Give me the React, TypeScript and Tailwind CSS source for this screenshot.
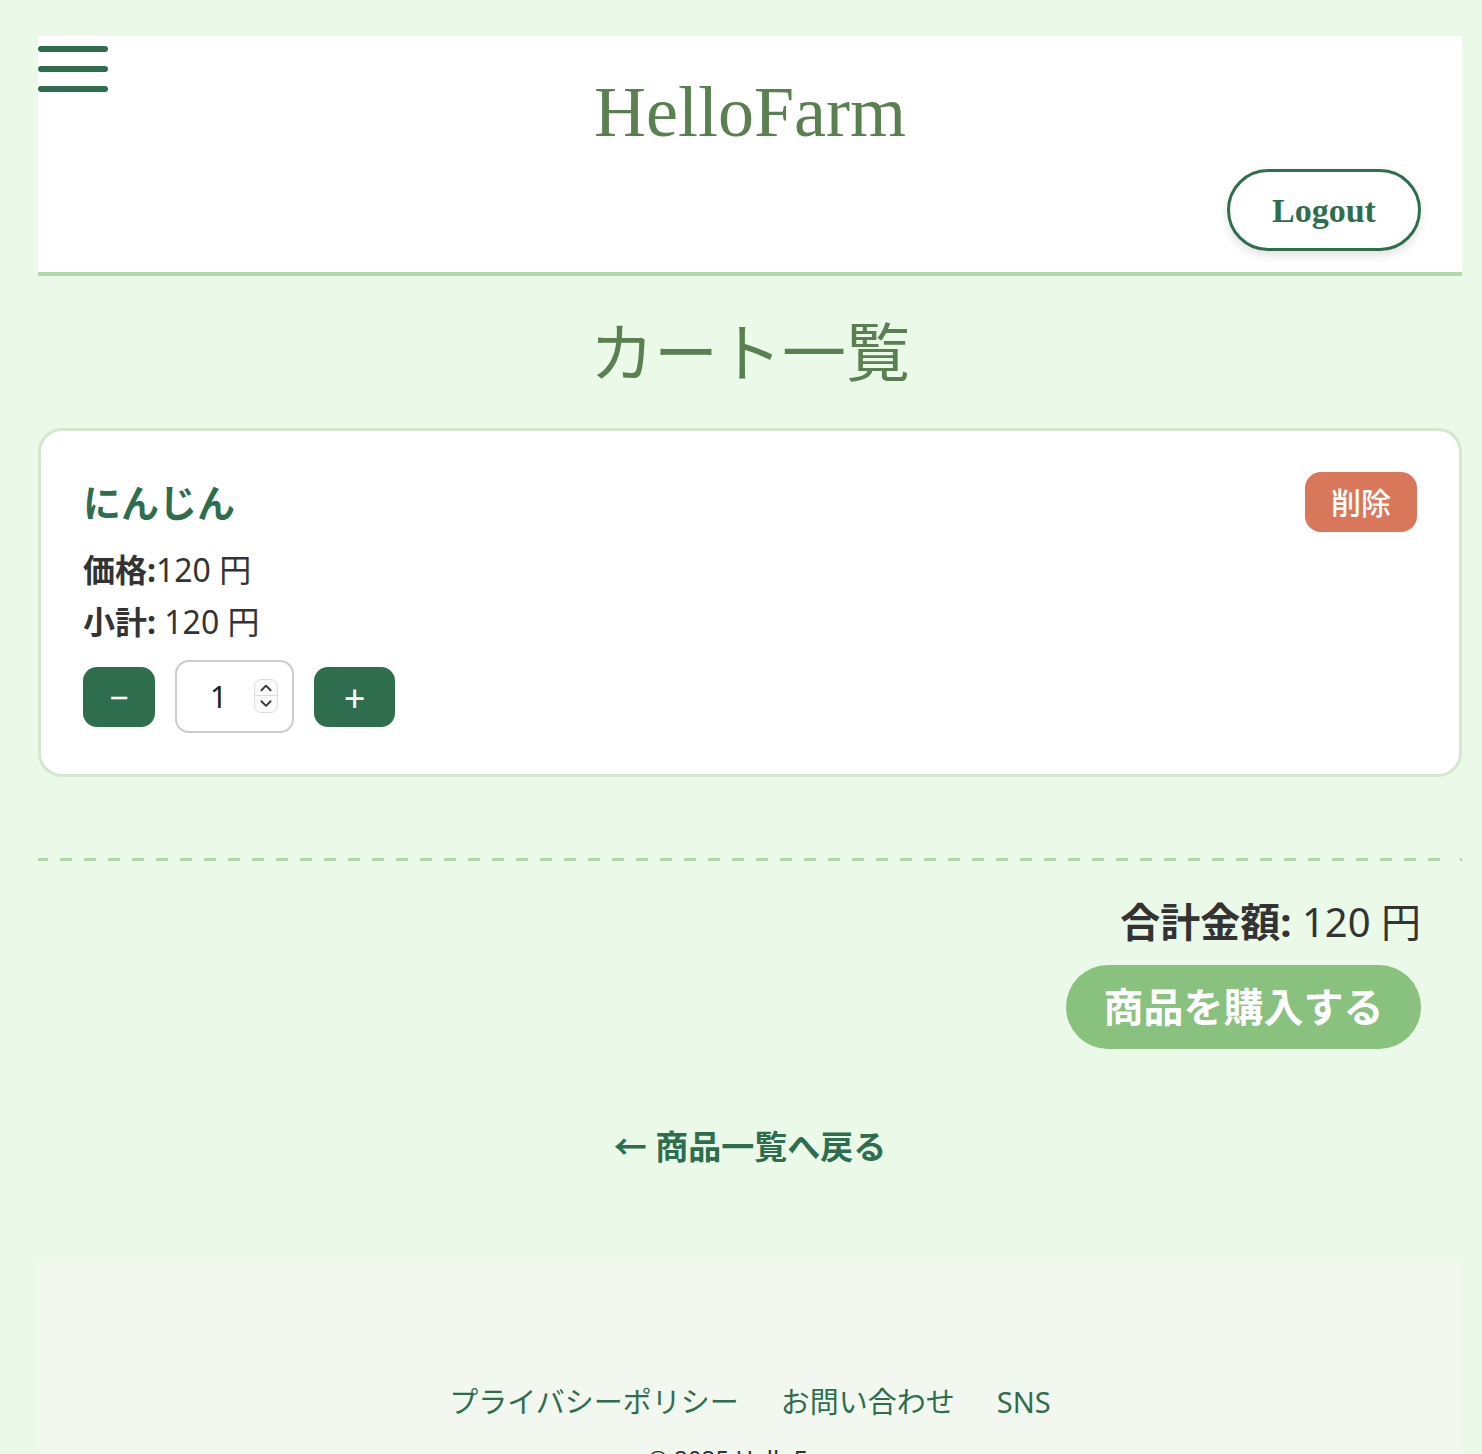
import React from 'react';

const jp = "font-['Noto_Sans','Noto_Sans_CJK_JP',sans-serif]";

function Header() {
  return (
    <header className="relative bg-white border-b-4 border-[#b0d8a8] pt-[40px] pb-[21px]">
      <button className="absolute left-0 top-[10px] flex flex-col gap-[14px]" aria-label="menu">
        <span className="block w-[70px] h-[6px] rounded-full bg-[#2e6e4e]" />
        <span className="block w-[70px] h-[6px] rounded-full bg-[#2e6e4e]" />
        <span className="block w-[70px] h-[6px] rounded-full bg-[#2e6e4e]" />
      </button>
      <h1 className="text-center text-[72px] leading-[72px] text-[#5a7f50] font-['Liberation_Serif',serif]">
        HelloFarm
      </h1>
      <div className="flex justify-end mt-[21px] pr-[41px]">
        <button className="h-[82px] w-[194px] rounded-full border-[3px] border-[#2e6e4e] bg-white text-[34px] font-bold text-[#2e6e4e] shadow-[0_4px_10px_rgba(0,0,0,0.12)] font-['Liberation_Serif',serif]">
          Logout
        </button>
      </div>
    </header>
  );
}

function QtyInput() {
  return (
    <div className="relative h-[73px] w-[119px]">
      <input
        type="text"
        defaultValue="1"
        className="h-full w-full rounded-[14px] border-2 border-[#cccccc] bg-white pl-[33px] text-[30px] text-[#222] outline-none"
      />
      <div className="absolute left-[79px] top-[19px] flex h-[34px] w-[24px] flex-col rounded-[7px] border border-[#dddddd] bg-[#fafafa]">
        <svg viewBox="0 0 24 16" className="h-1/2 w-full border-b border-[#dddddd]">
          <path d="M7 11 L12 6 L17 11" fill="none" stroke="#333" strokeWidth="2" strokeLinecap="round" strokeLinejoin="round" />
        </svg>
        <svg viewBox="0 0 24 16" className="h-1/2 w-full">
          <path d="M7 5 L12 10 L17 5" fill="none" stroke="#333" strokeWidth="2" strokeLinecap="round" strokeLinejoin="round" />
        </svg>
      </div>
    </div>
  );
}

function CartItem() {
  return (
    <div className="bg-white border-[3px] border-[#d4e8cf] rounded-[24px] px-[42px] pt-[41px] pb-[41px]">
      <div className="flex items-center justify-between h-[60px]">
        <h3 className="text-[38px] font-bold text-[#2e6e4e]">にんじん</h3>
        <button className="h-[60px] w-[112px] rounded-[16px] bg-[#d9775a] text-white text-[30px] font-medium">削除</button>
      </div>
      <div className="mt-[12px] text-[32px] leading-[52px] text-[#333]">
        <p><span className="font-bold">価格:</span>120 円</p>
        <p><span className="font-bold">小計:</span> 120 円</p>
      </div>
      <div className="mt-[12px] flex items-center gap-[20px]">
        <button className="h-[60px] w-[72px] rounded-[14px] bg-[#2e6e4e] text-white text-[34px] leading-none">−</button>
        <QtyInput />
        <button className="h-[60px] w-[81px] rounded-[14px] bg-[#2e6e4e] text-white text-[38px] leading-none">+</button>
      </div>
    </div>
  );
}

export default function App() {
  return (
    <div className={`min-h-[1454px] bg-[#ebf9e8] pt-[36px] ${jp}`}>
      <div className="ml-[38px] mr-[20px]">
        <Header />

        <main>
          <h2 className="mt-[28px] text-center text-[64px] leading-[96px] text-[#5a7f50]">カート一覧</h2>

          <div className="mt-[28px]">
            <CartItem />
          </div>

          <div className="mt-[81px] h-[3px] bg-[repeating-linear-gradient(90deg,transparent_0_10px,#b0d8a8_10px_22px,transparent_22px_24px)] bg-[position:-12px_0]" />

          <div className="flex flex-col items-end pr-[41px]">
            <p className="mt-[33px] text-[40px] leading-[56px] text-[#333]">
              <span className="font-bold">合計金額:</span> 120 円
            </p>
            <button className="mt-[15px] h-[84px] w-[355px] rounded-full bg-[#88c27e] text-white text-[40px] font-bold">
              商品を購入する
            </button>
          </div>

          <div className="mt-[75px] text-center">
            <a href="#" className="text-[33px] leading-[45px] font-bold text-[#2e6e4e]">← 商品一覧へ戻る</a>
          </div>
        </main>

        <footer className="mt-[92px] bg-[#f2f8ef] pt-[120px] pb-[40px] text-center">
          <nav className="flex justify-center gap-[42px] text-[29px] leading-[42px] text-[#2e6e4e]">
            <a href="#">プライバシーポリシー</a>
            <a href="#">お問い合わせ</a>
            <a href="#">SNS</a>
          </nav>
          <p className="mt-[18px] text-[24px] text-[#333]">© 2025 HelloFarm</p>
        </footer>
      </div>
    </div>
  );
}
